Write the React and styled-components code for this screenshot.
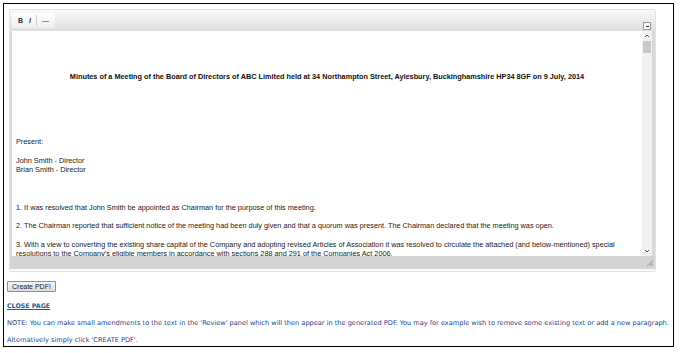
import React from 'react';
import styled, { createGlobalStyle } from 'styled-components';

const GlobalStyle = createGlobalStyle`
  html, body {
    margin: 0;
    padding: 0;
    background: #ffffff;
  }
`;

const Frame = styled.div`
  box-sizing: border-box;
  width: 671px;
  height: 344px;
  margin: 3px 0 0 3px;
  border: 1px solid #000;
  padding: 5px 0 0 3px;
  display: flex;
  flex-direction: column;
`;

const Editor = styled.div`
  box-sizing: border-box;
  width: 647px;
  height: 263px;
  margin-left: 2px;
  border: 1px solid #e2e2e2;
  border-radius: 2px;
  background: #d9d9d9;
  display: flex;
  flex-direction: column;
`;

const Toolbar = styled.div`
  height: 21px;
  flex-shrink: 0;
  display: flex;
  align-items: flex-start;
  justify-content: space-between;
  padding: 3px 2px 0 2px;
  box-sizing: border-box;
  background: linear-gradient(#f9f9f9, #dedede);
`;

const ButtonGroup = styled.div`
  display: flex;
  align-items: center;
  height: 15px;
  padding: 0 3px;
  background: linear-gradient(#ffffff, #efefef);
  border-radius: 2px;
`;

const ToolButton = styled.span`
  font-family: 'Liberation Sans', Arial, sans-serif;
  font-size: 7px;
  font-weight: ${p => (p.bold ? 700 : 400)};
  font-style: ${p => (p.italic ? 'italic' : 'normal')};
  color: #333;
  padding: 0 3px;
`;

const ToolSep = styled.span`
  width: 1px;
  height: 11px;
  background: #cfcfcf;
  margin: 0 2px;
`;

const CollapseButton = styled.div`
  width: 6px;
  height: 6px;
  margin: 9px 2px 0 0;
  border: 1px solid #9a9a9a;
  background: #fafafa;
  display: flex;
  align-items: center;
  justify-content: center;
  &::after {
    content: '';
    width: 3px;
    height: 1px;
    background: #333;
  }
`;

const BodyRow = styled.div`
  flex: 1;
  display: flex;
  padding: 0 3px 0 2px;
  min-height: 0;
`;

const Content = styled.div`
  flex: 1;
  background: #fff;
  overflow: hidden;
  padding: 0 4px;
  font-family: 'Liberation Sans', Arial, sans-serif;
  font-size: 7.3px;
  line-height: 9.3px;
  color: #222;
`;

const Title = styled.p`
  margin: 41px 0 56px;
  text-align: center;
  font-weight: 700;
  color: #111;
`;

const Para = styled.p`
  margin: 9.4px 0;
  min-height: ${p => (p.empty ? '9.3px' : 'auto')};
`;

const Scrollbar = styled.div`
  width: 10px;
  background: #f1f1f1;
  display: flex;
  flex-direction: column;
  align-items: center;
`;

const Arrow = styled.svg`
  width: 6px;
  height: 6px;
  margin: 2px 0;
  flex-shrink: 0;
`;

const Thumb = styled.div`
  width: 8px;
  height: 12px;
  background: #c9c9c9;
`;

const Track = styled.div`
  flex: 1;
`;

const StatusBar = styled.div`
  height: 15px;
  flex-shrink: 0;
  display: flex;
  justify-content: flex-end;
  align-items: flex-end;
  padding: 0 2px 3px 0;
  box-sizing: border-box;
  background: #d4d4d4;
  border-bottom: 2px solid #fafafa;
`;

const Grip = styled.svg`
  width: 6px;
  height: 6px;
`;

const PdfButton = styled.button`
  align-self: flex-start;
  margin: 9px 0 0 0;
  height: 11px;
  padding: 0 4px;
  font-family: 'Liberation Sans', Arial, sans-serif;
  font-size: 7px;
  line-height: 9px;
  color: #222;
  background: linear-gradient(#f6f6f6, #dddddd);
  border: 1px solid #8f8f8f;
  border-radius: 1px;
`;

const InfoLine = styled.p`
  margin: ${p => (p.first ? '10px' : '9px')} 0 0 0;
  font-family: 'DejaVu Sans', Verdana, sans-serif;
  font-size: 6.6px;
  line-height: 8px;
  color: #213f8c;
  white-space: nowrap;
`;

const CloseLink = styled.a`
  font-weight: 700;
  font-size: 6.3px;
  color: #1d5f8c;
  text-decoration: underline;
`;

export default function App() {
  return (
    <>
      <GlobalStyle />
      <Frame>
        <Editor>
          <Toolbar>
            <ButtonGroup>
              <ToolButton bold>B</ToolButton>
              <ToolButton bold italic>I</ToolButton>
              <ToolSep />
              <ToolButton>—</ToolButton>
            </ButtonGroup>
            <CollapseButton />
          </Toolbar>
          <BodyRow>
            <Content>
              <Title>
                Minutes of a Meeting of the Board of Directors of ABC Limited held at 34 Northampton Street, Aylesbury, Buckinghamshire HP34 8GF on 9 July, 2014
              </Title>
              <Para>Present:</Para>
              <Para>
                John Smith - Director
                <br />
                Brian Smith - Director
              </Para>
              <Para empty />
              <Para>1. It was resolved that John Smith be appointed as Chairman for the purpose of this meeting.</Para>
              <Para>2. The Chairman reported that sufficient notice of the meeting had been duly given and that a quorum was present. The Chairman declared that the meeting was open.</Para>
              <Para>
                3. With a view to converting the existing share capital of the Company and adopting revised Articles of Association it was resolved to circulate the attached (and below-mentioned) special resolutions to the Company's eligible members in accordance with sections 288 and 291 of the Companies Act 2006.
              </Para>
            </Content>
            <Scrollbar>
              <Arrow viewBox="0 0 6 6">
                <path d="M1 4 L3 2 L5 4" fill="none" stroke="#555" strokeWidth="1" />
              </Arrow>
              <Thumb />
              <Track />
              <Arrow viewBox="0 0 6 6">
                <path d="M1 2 L3 4 L5 2" fill="none" stroke="#555" strokeWidth="1" />
              </Arrow>
            </Scrollbar>
          </BodyRow>
          <StatusBar>
            <Grip viewBox="0 0 6 6">
              <path d="M6 0 L0 6 M6 2 L2 6 M6 4 L4 6" stroke="#888" strokeWidth="0.7" />
            </Grip>
          </StatusBar>
        </Editor>
        <PdfButton>Create PDF!</PdfButton>
        <InfoLine first>
          <CloseLink href="#">CLOSE PAGE</CloseLink>
        </InfoLine>
        <InfoLine>
          NOTE: You can make small amendments to the text in the 'Review' panel which will then appear in the generated PDF. You may for example wish to remove some existing text or add a new paragraph.
        </InfoLine>
        <InfoLine>Alternatively simply click 'CREATE PDF'.</InfoLine>
      </Frame>
    </>
  );
}
